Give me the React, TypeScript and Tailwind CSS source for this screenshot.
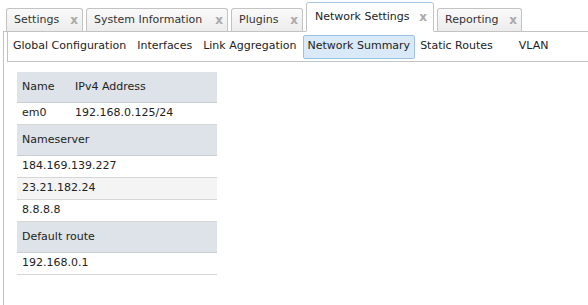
import React from "react";

const font = { fontFamily: '"DejaVu Sans", Verdana, sans-serif' };

function Close() {
  return <span className="text-[#aaaaaa] font-bold text-[12px] leading-none">x</span>;
}

function Tab({ label, w, active }: { label: string; w: string; active?: boolean }) {
  if (active) {
    return (
      <div
        className={`${w} h-[30px] -mb-[1px] relative z-10 flex items-center justify-between pl-[8px] pr-[6px] bg-white border border-[#c3c3c3] border-t-[#a9c8e4] border-b-white rounded-t-[3px] text-[#222]`}
      >
        <span>{label}</span>
        <Close />
      </div>
    );
  }
  return (
    <div
      className={`${w} h-[23px] flex items-center justify-between pl-[7px] pr-[4px] bg-gradient-to-b from-[#fafafa] to-[#ececec] border border-b-0 border-[#c3c3c3] rounded-t-[3px] text-[#333]`}
    >
      <span>{label}</span>
      <Close />
    </div>
  );
}

function Header({ children }: { children: React.ReactNode }) {
  return (
    <div className="h-[31px] flex items-center bg-[#dde3e8] border-b border-[#c9ced3] text-[#222]">
      {children}
    </div>
  );
}

function Row({ children, striped }: { children: React.ReactNode; striped?: boolean }) {
  return (
    <div
      className={`h-[22px] flex items-center border-b border-[#d6d6d6] text-[#222] ${striped ? "bg-[#f4f4f4]" : "bg-white"}`}
    >
      {children}
    </div>
  );
}

export default function App() {
  return (
    <div className="w-[588px] h-[305px] bg-white overflow-hidden text-[11px]" style={font}>
      <div className="flex items-end h-[31px] pl-[6px] gap-[3px]">
        <Tab label="Settings" w="w-[77px]" />
        <Tab label="System Information" w="w-[142px]" />
        <Tab label="Plugins" w="w-[72px]" />
        <Tab label="Network Settings" w="w-[128px]" active />
        <Tab label="Reporting" w="w-[85px]" />
      </div>
      <div className="ml-[3px] border-l border-t border-[#c3c3c3] h-[274px]">
        <div className="ml-[3px] border-l border-b border-[#c3c3c3] h-[30px] flex items-center text-[#222]">
          <div className="px-[5px] py-[5px]">Global Configuration</div>
          <div className="px-[5px] py-[5px] ml-[1px]">Interfaces</div>
          <div className="px-[5px] py-[5px] ml-[1px]">Link Aggregation</div>
          <div className="px-[4px] h-[24px] flex items-center ml-[1px] bg-[#dae9f7] border border-[#9dc1e3] rounded-[2px]">
            Network Summary
          </div>
          <div className="px-[5px] py-[5px]">Static Routes</div>
          <div className="px-[5px] py-[5px] ml-[16px]">VLAN</div>
        </div>
        <div className="pl-[13px] pt-[10px]">
          <div className="w-[200px]">
            <Header>
              <span className="w-[58px] pl-[5px]">Name</span>
              <span>IPv4 Address</span>
            </Header>
            <Row>
              <span className="w-[58px] pl-[5px]">em0</span>
              <span>192.168.0.125/24</span>
            </Row>
            <Header>
              <span className="pl-[5px]">Nameserver</span>
            </Header>
            <Row>
              <span className="pl-[5px]">184.169.139.227</span>
            </Row>
            <Row striped>
              <span className="pl-[5px]">23.21.182.24</span>
            </Row>
            <Row>
              <span className="pl-[5px]">8.8.8.8</span>
            </Row>
            <Header>
              <span className="pl-[5px]">Default route</span>
            </Header>
            <Row>
              <span className="pl-[5px]">192.168.0.1</span>
            </Row>
          </div>
        </div>
      </div>
    </div>
  );
}
